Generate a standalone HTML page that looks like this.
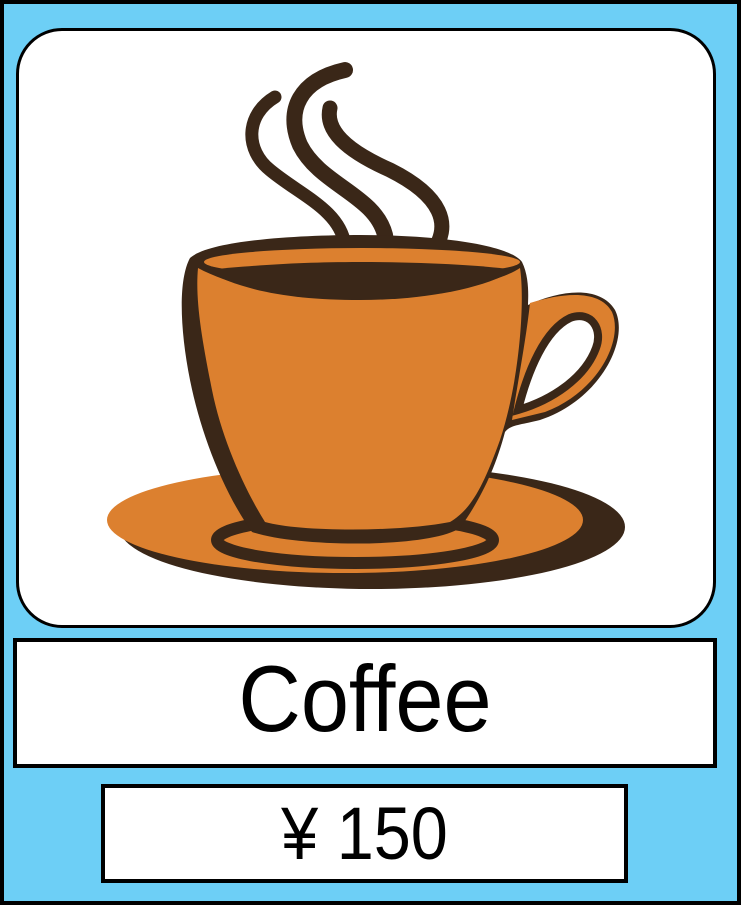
<!DOCTYPE html>
<html><head><meta charset="utf-8"><style>
html,body{margin:0;padding:0;}
body{width:741px;height:905px;position:relative;overflow:hidden;background:#6dcff6;font-family:"Liberation Sans",sans-serif;}
.frame{position:absolute;left:0;top:0;width:733px;height:897px;border:4px solid #000;background:#6dcff6;}
.card{position:absolute;left:16px;top:28px;width:694px;height:594px;border:3px solid #000;border-radius:46px;background:#fff;}
.name{position:absolute;left:13px;top:638px;width:696px;height:122px;border:4px solid #000;background:#fff;}
.price{position:absolute;left:101px;top:784px;width:519px;height:91px;border:4px solid #000;background:#fff;}
.t{position:absolute;left:0;right:0;text-align:center;white-space:nowrap;}
.name .t{top:-6px;font-size:94px;line-height:126px;transform:scaleX(0.92);}
.price .t{top:-2px;font-size:74px;line-height:96px;transform:scaleX(0.9);}
svg{position:absolute;left:0;top:0;}
</style></head><body>
<div class="frame"></div>
<div class="card"></div>
<svg width="741" height="905" viewBox="0 0 741 905">
 <g fill="none" stroke="#3a2718" stroke-linecap="round">
  <path d="M275,97 C245,115 245,150 270,170 C300,195 340,210 345,245" stroke-width="13"/>
  <path d="M345,70 C300,80 285,110 300,145 C320,185 375,195 385,235 C388,250 385,262 375,270" stroke-width="16"/>
  <path d="M330,108 C325,130 345,150 390,170 C440,195 455,225 430,255" stroke-width="15"/>
 </g>
 <ellipse cx="372" cy="527" rx="253" ry="62" fill="#3a2718"/>
 <ellipse cx="345" cy="520" rx="238" ry="53" fill="#dc802f"/>
 <ellipse cx="355" cy="540" rx="138" ry="23" fill="none" stroke="#3a2718" stroke-width="12"/>
 <path d="M190,258 C210,240 300,235 360,235 C440,235 510,245 522,262 C530,278 528,300 528,305 C560,290 600,285 615,310 C630,340 600,400 540,420 C520,425 510,425 505,432 C495,470 480,500 460,528 C430,548 300,548 252,532 C222,490 200,430 190,380 C180,330 178,280 190,258 Z" fill="#3a2718"/>
 <path d="M198,268 C230,285 280,298 350,298 C430,298 500,282 520,268 C525,300 520,380 500,440 C482,490 470,510 450,522 C400,532 300,532 265,522 C245,490 222,440 212,390 C202,340 195,300 198,268 Z" fill="#dc802f"/>
 <ellipse cx="362" cy="262" rx="158" ry="14" fill="#dc802f"/>
 <path d="M205,270 C260,265 300,262 360,262 C430,262 490,266 515,270 C480,290 420,300 360,300 C290,300 240,290 205,270 Z" fill="#3a2718"/>
 <path d="M530,303 C565,292 600,290 612,312 C624,340 598,392 545,412 L512,420 C518,380 526,340 530,303 Z" fill="#dc802f"/>
 <path d="M518,410 C528,370 545,330 570,318 C592,310 603,330 596,348 C585,378 552,400 518,410 Z" fill="#fff" stroke="#3a2718" stroke-width="8"/>
</svg>
<div class="name"><div class="t">Coffee</div></div>
<div class="price"><div class="t">¥ 150</div></div>
</body></html>
